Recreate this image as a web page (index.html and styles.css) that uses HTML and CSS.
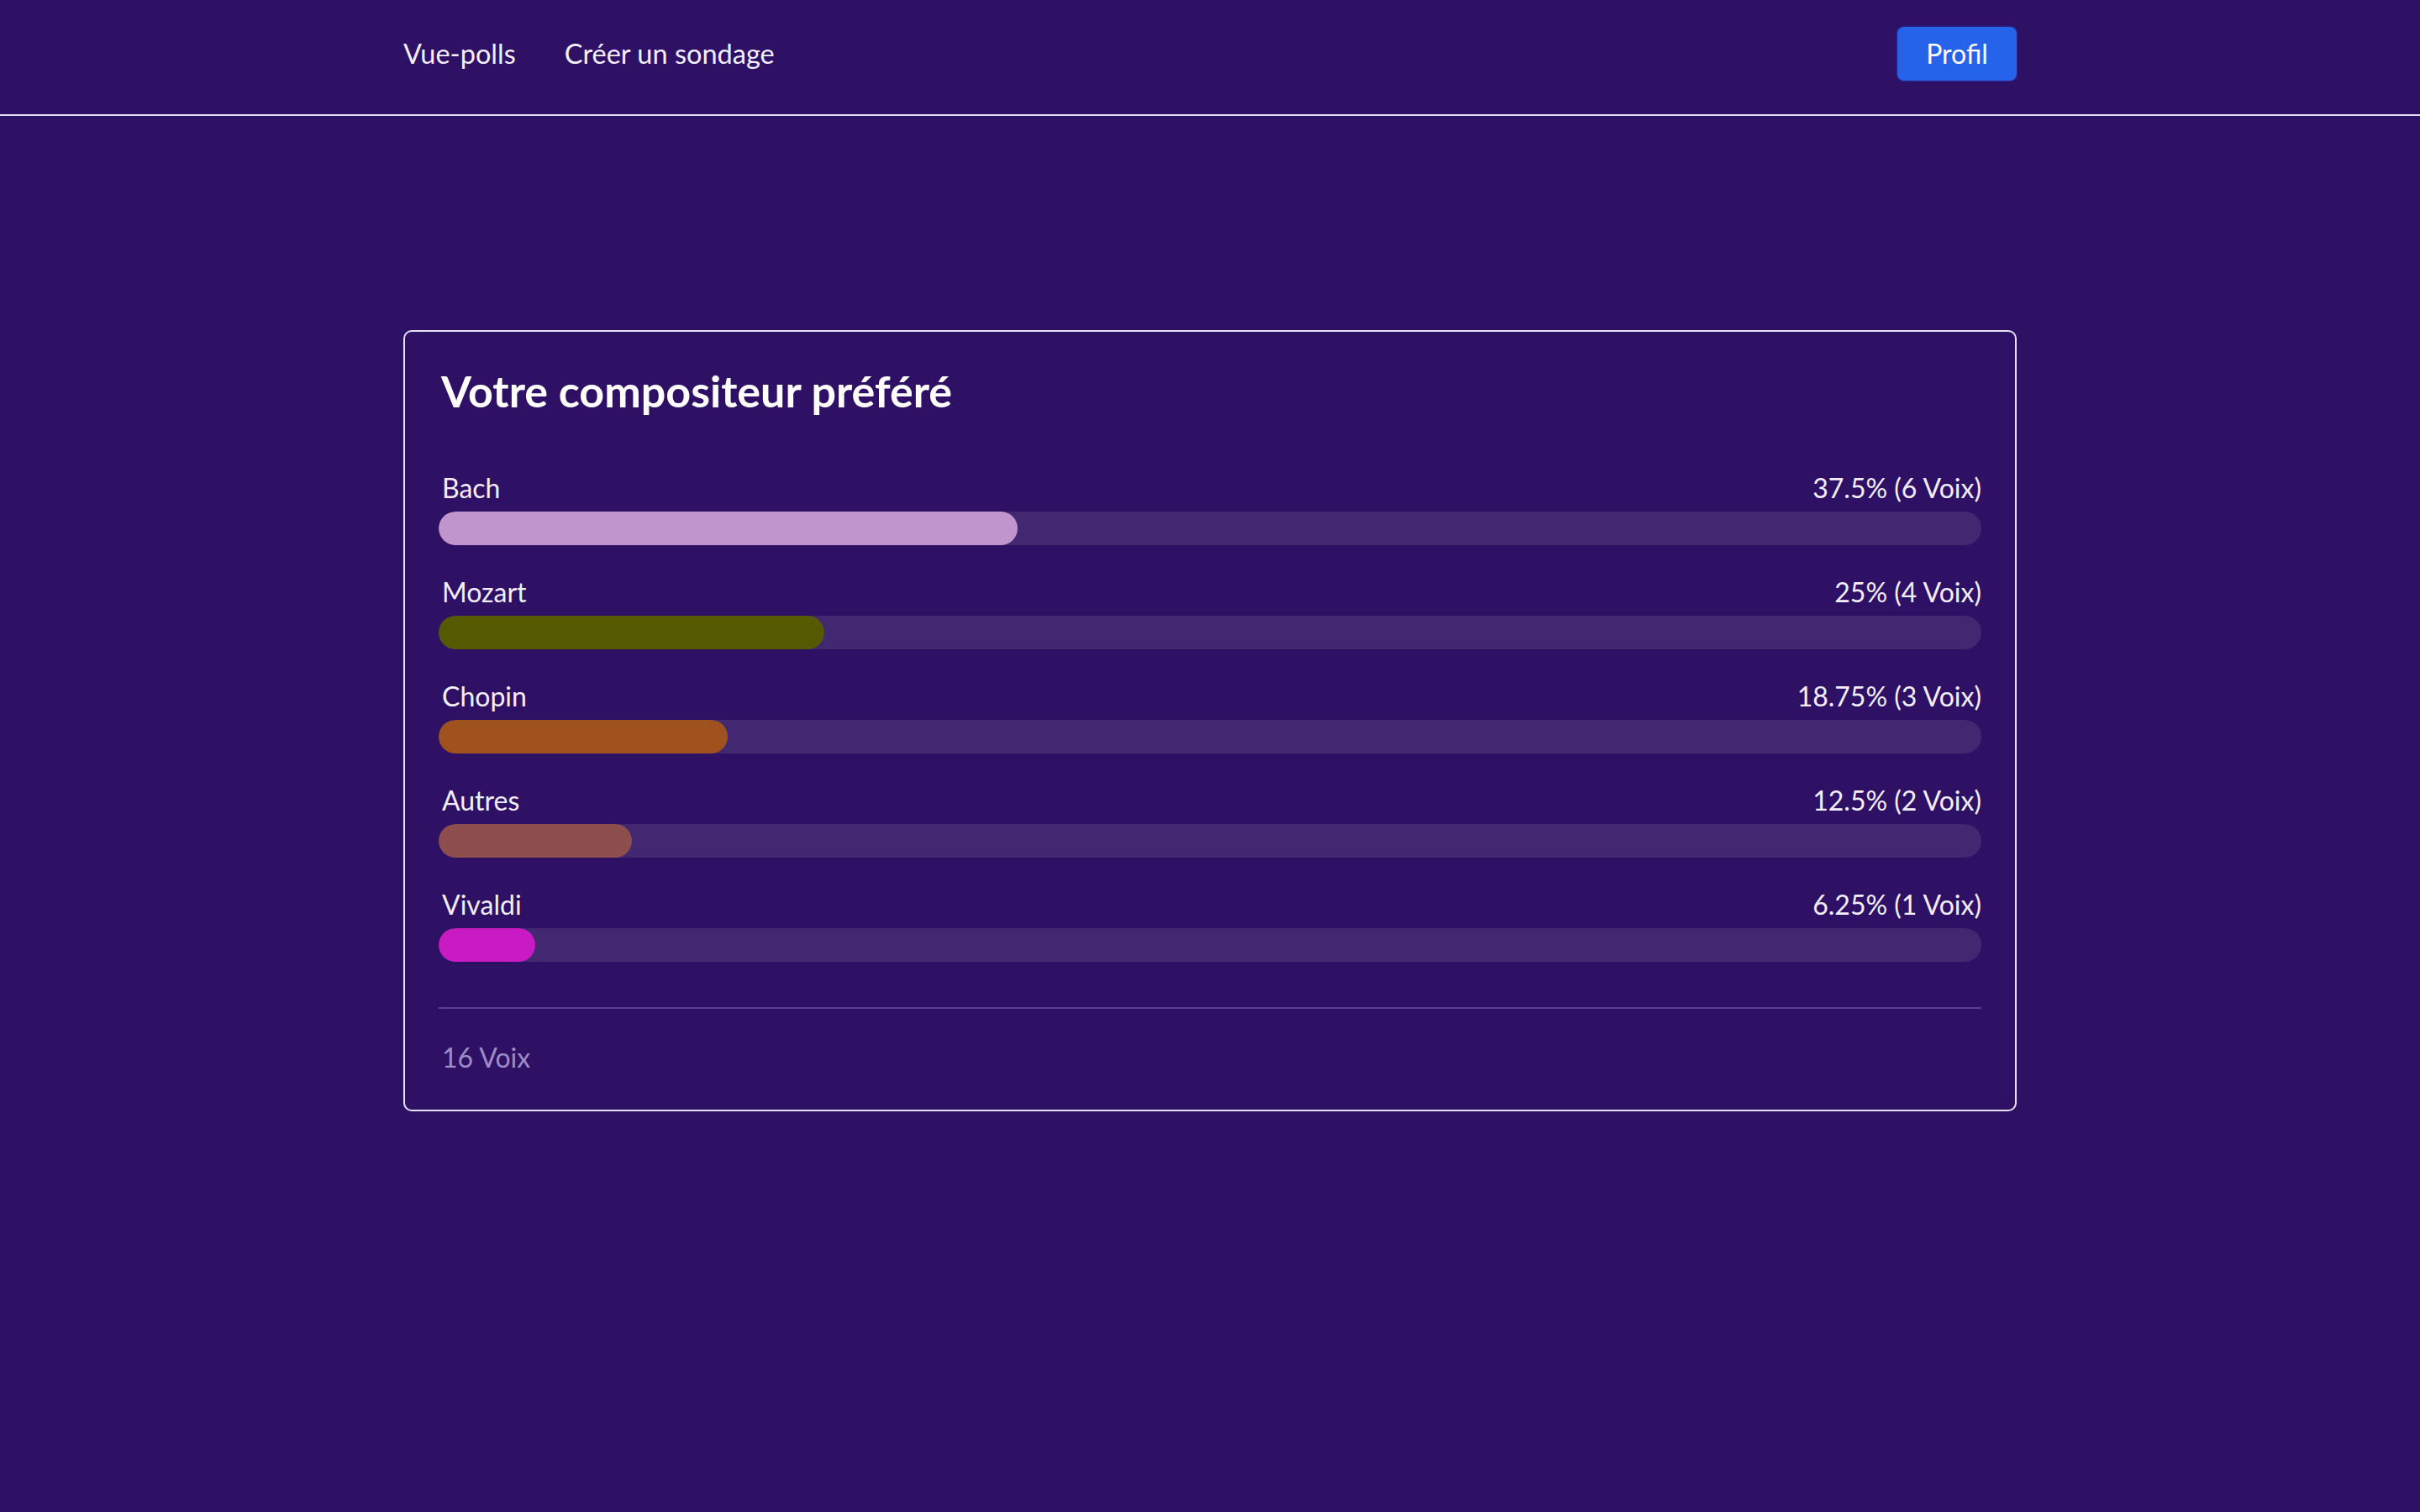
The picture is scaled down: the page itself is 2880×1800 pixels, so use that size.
FILE: index.html
```html
<!DOCTYPE html>
<html lang="fr">
<head>
<meta charset="utf-8">
<title>Vue-polls</title>
<link rel="stylesheet" href="styles.css">
</head>
<body>
<header class="navbar">
  <div class="container nav-inner">
    <nav class="nav-links">
      <a class="nav-link" href="#">Vue-polls</a>
      <a class="nav-link" href="#">Créer un sondage</a>
    </nav>
    <button class="btn-profil">Profil</button>
  </div>
</header>
<main class="container main">
  <section class="card">
    <h1 class="card-title">Votre compositeur préféré</h1>
    <div class="options">
      <div class="option">
        <div class="option-head"><span>Bach</span><span>37.5% (6 Voix)</span></div>
        <div class="track"><div class="fill fill-bach" style="width:37.5%"></div></div>
      </div>
      <div class="option">
        <div class="option-head"><span>Mozart</span><span>25% (4 Voix)</span></div>
        <div class="track"><div class="fill fill-mozart" style="width:25%"></div></div>
      </div>
      <div class="option">
        <div class="option-head"><span>Chopin</span><span>18.75% (3 Voix)</span></div>
        <div class="track"><div class="fill fill-chopin" style="width:18.75%"></div></div>
      </div>
      <div class="option">
        <div class="option-head"><span>Autres</span><span>12.5% (2 Voix)</span></div>
        <div class="track"><div class="fill fill-autres" style="width:12.5%"></div></div>
      </div>
      <div class="option">
        <div class="option-head"><span>Vivaldi</span><span>6.25% (1 Voix)</span></div>
        <div class="track"><div class="fill fill-vivaldi" style="width:6.25%"></div></div>
      </div>
    </div>
    <div class="card-footer">16 Voix</div>
  </section>
</main>
</body>
</html>
```

FILE: styles.css
```css
* { box-sizing: border-box; }
html, body {
  margin: 0;
  padding: 0;
}
body {
  background: #2e1065;
  color: #f3eefc;
  font-family: "Lato", "Open Sans", sans-serif;
  font-size: 32px;
  min-height: 1800px;
}
.container {
  width: 1920px;
  margin: 0 auto;
}
.navbar {
  height: 138px;
  border-bottom: 2px solid #e6def5;
}
.nav-inner {
  height: 136px;
  display: flex;
  align-items: center;
  justify-content: space-between;
  padding-bottom: 9px;
}
.nav-links {
  display: flex;
  gap: 58px;
}
.nav-link {
  color: #f3eefc;
  text-decoration: none;
  font-size: 32.5px;
  line-height: 48px;
}
.btn-profil {
  background: #2563eb;
  color: #ffffff;
  border: none;
  border-radius: 8px;
  font-family: inherit;
  font-size: 32px;
  line-height: 48px;
  padding: 8px 32px 8px;
  width: 142px;
  box-shadow: 0 0 3px rgba(37, 99, 235, 0.6);
}
.main {
  padding-top: 255px;
}
.card {
  border: 2px solid #e9e2f6;
  border-radius: 10px;
  padding: 40px 40px 42px;
}
.card-title {
  margin: 0 0 62px;
  font-size: 52px;
  line-height: 60px;
  font-weight: 700;
  color: #ffffff;
  padding-left: 3px;
}
.options {
  display: flex;
  flex-direction: column;
  gap: 32px;
}
.option-head {
  display: flex;
  justify-content: space-between;
  font-size: 32px;
  line-height: 48px;
  padding: 0 0 0 4px;
  margin-bottom: 4px;
}
.track {
  height: 40px;
  border-radius: 20px;
  background: #412870;
  overflow: hidden;
}
.fill {
  height: 100%;
  border-radius: 20px;
}
.fill-bach { background: #c094cc; }
.fill-mozart { background: #555a00; }
.fill-chopin { background: #a0521e; }
.fill-autres { background: #8e4e4e; }
.fill-vivaldi { background: #c81bc4; }
.card-footer {
  margin-top: 54px;
  border-top: 2px solid #5a3f9a;
  padding: 38px 0 0 4px;
  font-size: 32px;
  line-height: 40px;
  color: #9e8cc6;
}
```
